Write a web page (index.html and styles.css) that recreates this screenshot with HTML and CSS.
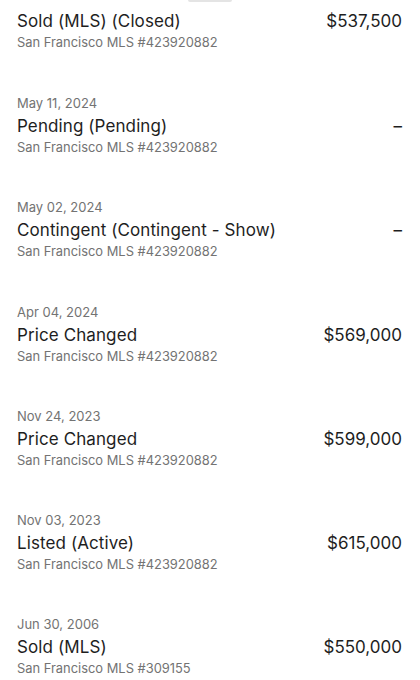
FILE: index.html
```html
<!DOCTYPE html>
<html lang="en">
<head>
<meta charset="utf-8">
<link rel="stylesheet" href="styles.css">
</head>
<body>
<div class="handle"></div>
<ul class="history">
  <li class="event first">
    <div class="info">
      <div class="title">Sold (MLS) (Closed)</div>
      <div class="source">San Francisco MLS #423920882</div>
    </div>
    <div class="price">$537,500</div>
  </li>
  <li class="event">
    <div class="info">
      <div class="date">May 11, 2024</div>
      <div class="title">Pending (Pending)</div>
      <div class="source">San Francisco MLS #423920882</div>
    </div>
    <div class="price">–</div>
  </li>
  <li class="event">
    <div class="info">
      <div class="date">May 02, 2024</div>
      <div class="title">Contingent (Contingent - Show)</div>
      <div class="source">San Francisco MLS #423920882</div>
    </div>
    <div class="price">–</div>
  </li>
  <li class="event">
    <div class="info">
      <div class="date">Apr 04, 2024</div>
      <div class="title">Price Changed</div>
      <div class="source">San Francisco MLS #423920882</div>
    </div>
    <div class="price">$569,000</div>
  </li>
  <li class="event">
    <div class="info">
      <div class="date">Nov 24, 2023</div>
      <div class="title">Price Changed</div>
      <div class="source">San Francisco MLS #423920882</div>
    </div>
    <div class="price">$599,000</div>
  </li>
  <li class="event">
    <div class="info">
      <div class="date">Nov 03, 2023</div>
      <div class="title">Listed (Active)</div>
      <div class="source">San Francisco MLS #423920882</div>
    </div>
    <div class="price">$615,000</div>
  </li>
  <li class="event">
    <div class="info">
      <div class="date">Jun 30, 2006</div>
      <div class="title">Sold (MLS)</div>
      <div class="source">San Francisco MLS #309155</div>
    </div>
    <div class="price">$550,000</div>
  </li>
</ul>
</body>
</html>
```

FILE: styles.css
```css
html, body {
  margin: 0;
  padding: 0;
  background: #ffffff;
}
body {
  font-family: Inter, "Noto Sans", sans-serif;
  color: #1c1c1c;
  overflow: hidden;
}
.handle {
  width: 44px;
  height: 2px;
  margin: 0 auto;
  background: #e4e4e4;
  border-radius: 0 0 2px 2px;
}
.history {
  list-style: none;
  margin: 0;
  padding: 7px 18px 0 17px;
  display: flex;
  flex-direction: column;
  gap: 38.2px;
}
.event.first {
  margin-bottom: 1px;
}
.event {
  display: grid;
  grid-template-columns: 1fr auto;
  align-items: end;
}
.info {
  display: flex;
  flex-direction: column;
}
.date {
  font-size: 13px;
  line-height: 22px;
  color: #737373;
}
.title {
  font-size: 17px;
  line-height: 24px;
  letter-spacing: 0.1px;
  color: #1e1e1e;
}
.source {
  font-size: 12.9px;
  line-height: 20px;
  color: #737373;
}
.price {
  font-size: 17px;
  line-height: 24px;
  margin-bottom: 20px;
  color: #1e1e1e;
}
```
